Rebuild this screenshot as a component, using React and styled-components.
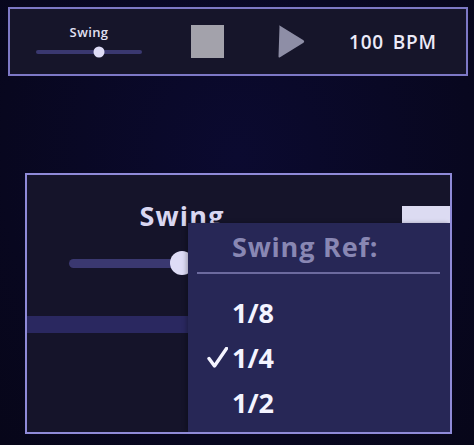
import React from "react";
import styled, { createGlobalStyle } from "styled-components";

const Global = createGlobalStyle`
  html, body { margin: 0; padding: 0; }
  body {
    width: 474px;
    height: 445px;
    overflow: hidden;
    background: radial-gradient(ellipse at 50% 35%, #0b0a30 0%, #08071f 70%, #070619 100%);
    font-family: "Open Sans", "DejaVu Sans", sans-serif;
  }
`;

const Page = styled.div`
  display: flex;
  flex-direction: column;
  padding: 7px 0 0 8px;
`;

const TopBar = styled.div`
  box-sizing: border-box;
  width: 460px;
  height: 69px;
  border: 2px solid #7d78c6;
  background: #16152a;
  display: flex;
  align-items: center;
  padding-left: 26px;
`;

const SwingGroup = styled.div`
  display: flex;
  flex-direction: column;
  align-items: center;
  gap: 7px;
  width: 106px;
  margin-top: -1px;
`;

const SmallLabel = styled.div`
  font-size: 13px;
  font-weight: 600;
  line-height: 15px;
  color: #e2e0f2;
  letter-spacing: 0.4px;
`;

const Track = styled.div`
  position: relative;
  width: ${(p) => p.$w}px;
  height: ${(p) => p.$h}px;
  border-radius: ${(p) => p.$h / 2}px;
  background: #3a3870;
  margin: ${(p) => (p.$thumb - p.$h) / 2}px 0;
`;

const Thumb = styled.div`
  position: absolute;
  top: 50%;
  width: ${(p) => p.$size}px;
  height: ${(p) => p.$size}px;
  border-radius: 50%;
  background: #dedcf6;
  transform: translate(-50%, -50%);
`;

const StopBtn = styled.div`
  width: 33px;
  height: 33px;
  background: #a3a2ab;
  margin-left: 49px;
`;

const PlayBtn = styled.svg`
  margin-left: 53px;
  display: block;
`;

const Bpm = styled.div`
  margin-left: 44px;
  font-size: 19px;
  font-weight: 600;
  color: #eceaf8;
  word-spacing: 3px;
  letter-spacing: 0.8px;
`;

const Panel = styled.div`
  position: relative;
  box-sizing: border-box;
  margin: 97px 0 0 17px;
  width: 427px;
  height: 261px;
  border: 2px solid #8f8ad8;
  background: #15142a;
  display: flex;
  flex-direction: column;
  overflow: hidden;
`;

const PanelTop = styled.div`
  display: flex;
  height: 141px;
`;

const SwingControl = styled.div`
  width: 310px;
  display: flex;
  flex-direction: column;
  align-items: center;
  padding-top: 25px;
  gap: 19px;
`;

const BigLabel = styled.div`
  font-size: 27px;
  font-weight: 700;
  line-height: 32px;
  color: #d9d7f1;
  letter-spacing: 1.2px;
`;

const WhiteTab = styled.div`
  margin: 31px 0 0 65px;
  width: 48px;
  height: 30px;
  background: #dcdbf2;
`;

const PurpleBar = styled.div`
  height: 17px;
  background: #2a2860;
`;

const Dropdown = styled.div`
  position: absolute;
  left: 161px;
  top: 48px;
  right: 0;
  bottom: 0;
  background: #272756;
  box-shadow: -2px 0 4px rgba(0, 0, 0, 0.25);
  display: flex;
  flex-direction: column;
`;

const Heading = styled.div`
  padding: 8px 0 0 44px;
  font-size: 27px;
  font-weight: 700;
  line-height: 32px;
  color: #8987b3;
  letter-spacing: 0.8px;
`;

const Divider = styled.div`
  margin: 9px 10px 0 9px;
  height: 2px;
  background: #6c6a9e;
`;

const Items = styled.div`
  display: flex;
  flex-direction: column;
  padding-top: 16px;
`;

const Item = styled.div`
  display: flex;
  align-items: center;
  height: 45px;
  font-size: 27px;
  font-weight: 700;
  color: #f4f4ff;
`;

const CheckCell = styled.span`
  width: 44px;
  display: flex;
  justify-content: flex-end;
  padding-right: 4px;
  box-sizing: border-box;
`;

function CheckIcon() {
  return (
    <svg width="21" height="21" viewBox="0 0 21 21">
      <path
        d="M2 11.5 L7.5 19 L19.5 1.5"
        fill="none"
        stroke="#f4f4ff"
        strokeWidth="3.4"
        strokeLinecap="round"
        strokeLinejoin="round"
      />
    </svg>
  );
}

export default function App() {
  const refs = ["1/8", "1/4", "1/2"];
  const selected = "1/4";
  return (
    <>
      <Global />
      <Page>
        <TopBar>
          <SwingGroup>
            <SmallLabel>Swing</SmallLabel>
            <Track $w={106} $h={4} $thumb={11}>
              <Thumb $size={11} style={{ left: "59.5%" }} />
            </Track>
          </SwingGroup>
          <StopBtn />
          <PlayBtn width="28" height="35" viewBox="0 0 28 35">
            <path
              d="M2.5 2.5 Q1.5 1 3 1.8 L26.5 16.3 Q28 17.5 26.5 18.7 L3 33.2 Q1.5 34 1.5 32.5 Z"
              fill="#8e8ea6"
            />
          </PlayBtn>
          <Bpm>100 BPM</Bpm>
        </TopBar>
        <Panel>
          <PanelTop>
            <SwingControl>
              <BigLabel>Swing</BigLabel>
              <Track $w={226} $h={9} $thumb={24}>
                <Thumb $size={24} style={{ left: "50%" }} />
              </Track>
            </SwingControl>
            <WhiteTab />
          </PanelTop>
          <PurpleBar />
          <Dropdown>
            <Heading>Swing Ref:</Heading>
            <Divider />
            <Items>
              {refs.map((r) => (
                <Item key={r}>
                  <CheckCell>{r === selected ? <CheckIcon /> : null}</CheckCell>
                  {r}
                </Item>
              ))}
            </Items>
          </Dropdown>
        </Panel>
      </Page>
    </>
  );
}
